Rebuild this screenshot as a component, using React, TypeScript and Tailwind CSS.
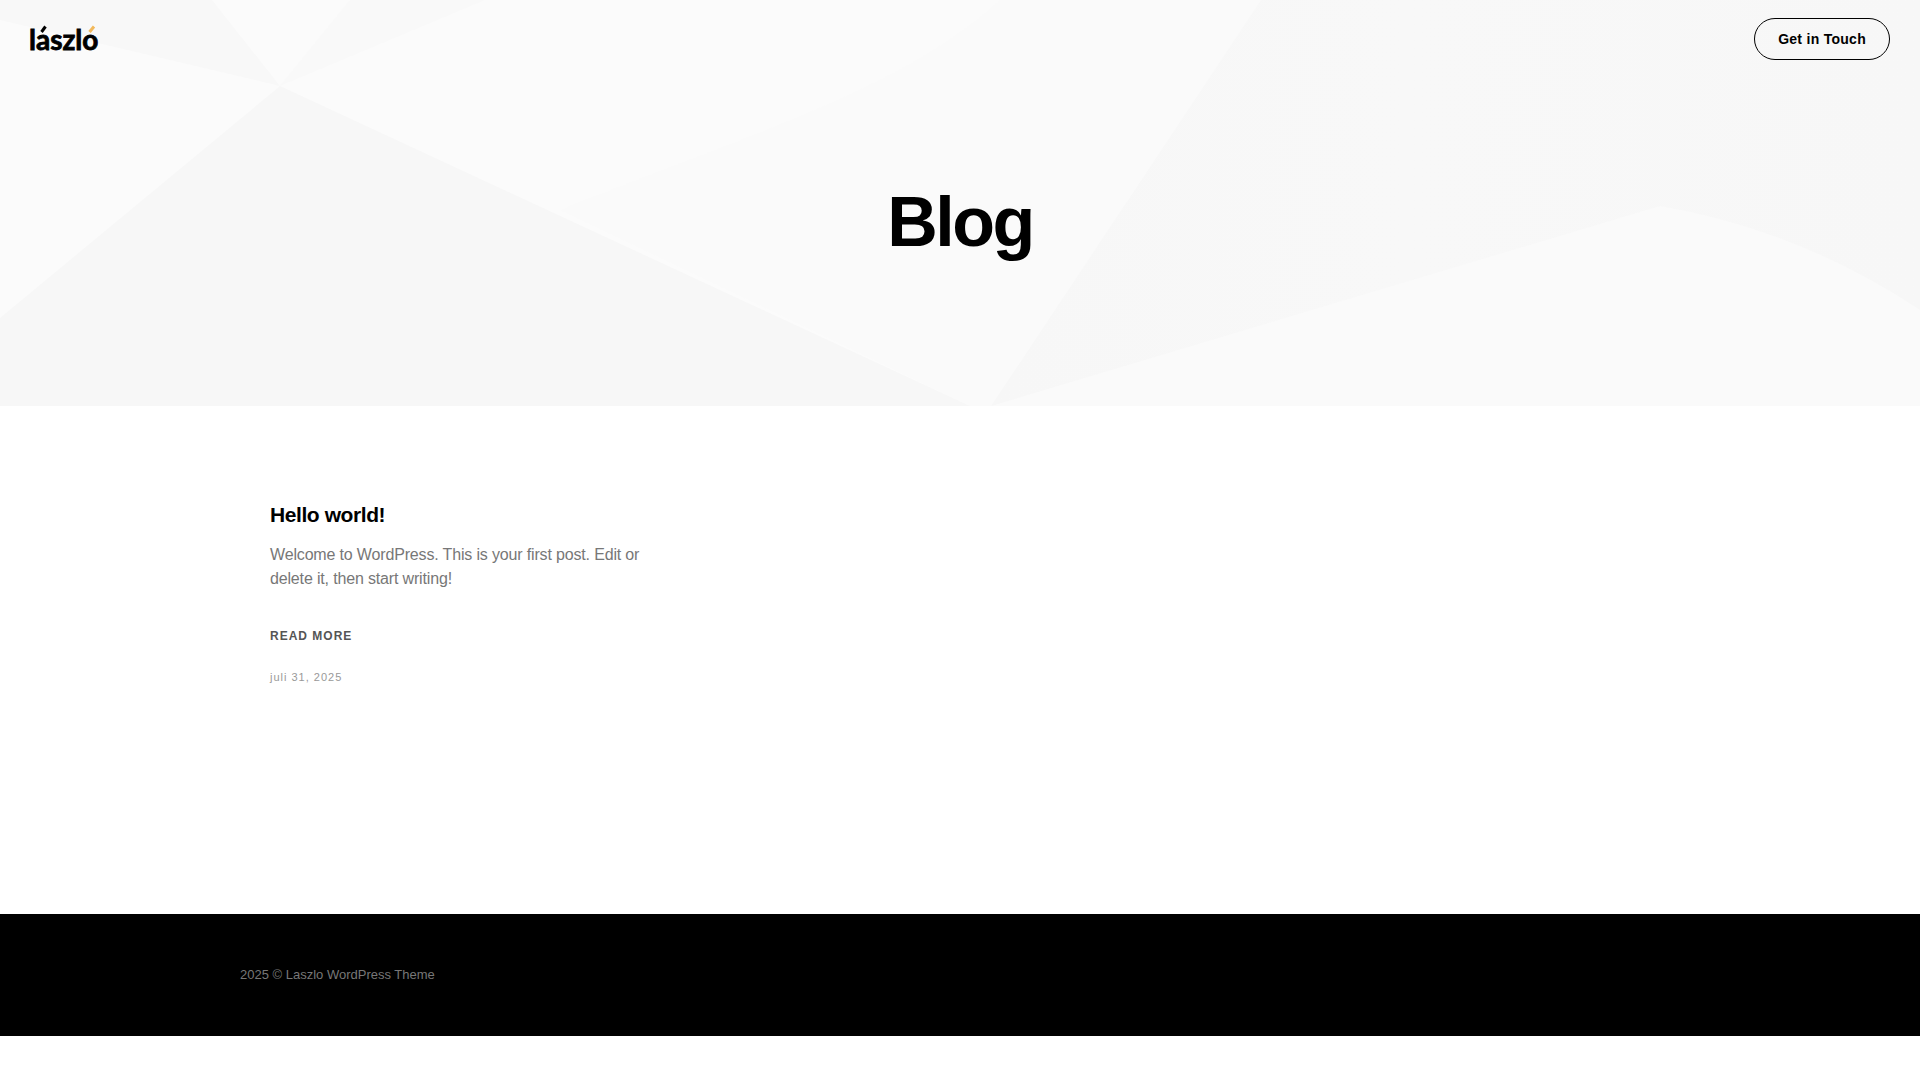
function Logo() {
  return (
    <a href="#" aria-label="lászló" className="block">
      <svg width="76" height="30" viewBox="0 0 76 30" aria-hidden="true" className="block overflow-visible">
        <text
          x="-1"
          y="26"
          fill="#000"
          stroke="#000"
          strokeWidth="0.8"
          className="font-['Lato',sans-serif] text-[28px] font-bold"
        >
          laszlo
        </text>
        <path d="M11.5 8L15.5 2.5" stroke="#000" strokeWidth="3" />
        <path d="M59.5 8L64 2.5" stroke="#f2b95c" strokeWidth="3" />
      </svg>
    </a>
  );
}

function Backdrop() {
  return (
    <svg
      className="absolute inset-0 h-full w-full"
      viewBox="0 0 1920 406"
      preserveAspectRatio="none"
      aria-hidden="true"
    >
      <defs>
        <linearGradient id="wing" x1="0" y1="0" x2="1" y2="0">
          <stop offset="0" stopColor="#f7f7f7" />
          <stop offset="0.45" stopColor="#f8f8f8" />
          <stop offset="1" stopColor="#f7f7f7" />
        </linearGradient>
      </defs>
      <rect width="1920" height="406" fill="#fbfbfb" />
      <path d="M560 210 C760 130 900 90 1000 0 L1261 0 L991 406 L970 406 Z" fill="#fafafa" />
      <path d="M0 0H212L280 86L0 20Z" fill="#f8f8f8" />
      <path d="M350 0H485L280 86Z" fill="#f9f9f9" />
      <path d="M280 86L0 318V406H970Z" fill="#f7f7f7" />
      <path d="M1261 0H1920V406H991Z" fill="url(#wing)" />
      <path d="M991 406L1660 206Q1800 230 1920 310V406Z" fill="#fafafa" />
    </svg>
  );
}

export default function App() {
  return (
    <div className="min-h-screen bg-white font-['Liberation_Sans',Arial,sans-serif]">
      <div className="relative">
        <Backdrop />
        <header className="relative flex items-center justify-between px-[30px] pt-[18px]">
          <Logo />
          <button
            type="button"
            className="rounded-full border border-black px-[23px] py-[10px] text-sm font-bold tracking-[0.02em] text-black"
          >
            Get in Touch
          </button>
        </header>
        <div className="relative px-8 pt-[117px] pb-[139px] text-center">
          <h1 className="text-[70px] leading-[90px] font-bold tracking-[-0.035em] text-black">Blog</h1>
        </div>
      </div>

      <main className="mx-auto max-w-[1440px] px-[30px] pt-[95px] pb-[227px]">
        <article className="max-w-[400px]">
          <h2 className="text-[21px] leading-7 font-bold tracking-[-0.02em] text-black">
            <a href="#">Hello world!</a>
          </h2>
          <p className="mt-[14px] text-base leading-6 tracking-[-0.01em] text-[#777]">
            Welcome to WordPress. This is your first post. Edit or delete it, then start writing!
          </p>
          <a href="#" className="mt-[35px] block text-xs leading-5 font-bold tracking-[1px] text-[#555]">
            READ MORE
          </a>
          <time dateTime="2025-07-31" className="mt-[21px] block text-[11px] leading-5 tracking-[1px] text-[#999]">
            juli 31, 2025
          </time>
        </article>
      </main>

      <footer className="bg-black py-[50px]">
        <p className="mx-auto max-w-[1440px] text-[13px] leading-[22px] text-[#777]">
          2025 © Laszlo WordPress Theme
        </p>
      </footer>
    </div>
  );
}
